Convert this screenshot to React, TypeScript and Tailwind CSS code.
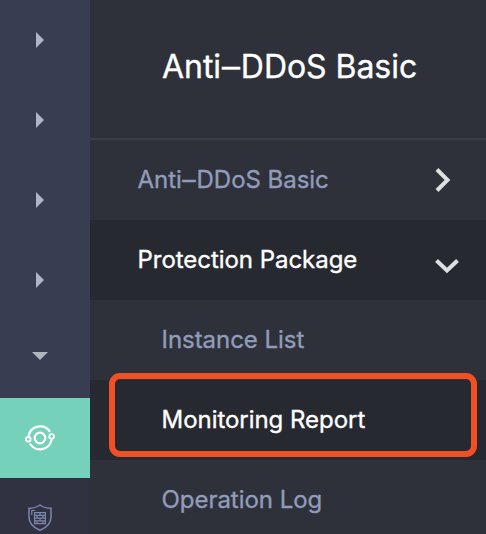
const RightArrow = () => (
  <div className="flex h-20 items-center justify-center">
    <svg width="8" height="16" viewBox="0 0 8 16" fill="#aeb4c4"><path d="M0 0 8 8 0 16Z" /></svg>
  </div>
);

const Dash = () => <span className="mx-[.06em] inline-block scale-x-[1.12]">–</span>;

export default function App() {
  return (
    <div className="flex h-[534px] w-[486px] overflow-hidden bg-[#2e3139] font-['Inter','Liberation_Sans',sans-serif] text-[24px] tracking-[-.04px] text-[#919cba] [-webkit-text-stroke:0.35px]">
      <aside className="flex w-[90px] shrink-0 flex-col bg-[#393d51] *:pr-[10px]">
        <RightArrow />
        <RightArrow />
        <RightArrow />
        <RightArrow />
        <div className="flex h-[78px] shrink-0 justify-center pt-8">
          <svg width="16" height="8" viewBox="0 0 16 8" fill="#b1b6c3"><path d="M0 0H16L8 8Z" /></svg>
        </div>
        <div className="flex h-20 shrink-0 items-center justify-center bg-[#76d1bb]">
          <svg width="32" height="32" viewBox="0 0 32 32" fill="none" stroke="white" strokeWidth="2.3">
            <circle cx="16" cy="16" r="5.3" />
            <path d="M4.6 13.8A11.8 11.8 0 0 1 26 9.8M5.8 21.5A11.8 11.8 0 0 0 27.6 17.6" />
            <circle cx="4.3" cy="17.3" r="2.3" strokeWidth="1.8" />
            <circle cx="27.6" cy="14.5" r="2.3" strokeWidth="1.8" />
          </svg>
        </div>
        <div className="flex h-14 justify-center bg-[#303241] pt-[26px]">
          <svg width="24" height="28" viewBox="0 0 24 28" fill="none" stroke="#7e86ae" strokeWidth="1.5">
            <path d="M12 1C8.5 3.4 5 4.3 1 4.3V13C1 19 5 23.5 12 26.2C19 23.5 23 19 23 13V4.3C19 4.3 15.5 3.4 12 1Z" />
            <path strokeWidth="1.2" d="M3.8 11V6.5H7.2" />
            <path strokeWidth="1.2" d="M6.6 8.6H17.4V19.6H6.6ZM6.6 11.4H17.4M6.6 14.1H17.4M6.6 16.9H17.4M12 8.6V11.4M9 11.4V14.1M15 11.4V14.1M12 14.1V16.9M9 16.9V19.6M15 16.9V19.6" />
          </svg>
        </div>
      </aside>
      <main className="flex-1">
        <h1 className="flex h-[140px] items-center border-b-2 border-[#3b3e47] pb-1 pl-[72px] text-[32px] whitespace-nowrap text-white">
          <span>Anti<Dash />DDoS Basic</span>
        </h1>
        <nav className="whitespace-nowrap">
          <div className="flex h-20 items-center justify-between pr-[35px] pl-[47.5px]">
            <span>Anti<Dash />DDoS Basic</span>
            <svg width="16" height="24" viewBox="0 0 16 24" fill="none" stroke="#dedfe0" strokeWidth="4"><path d="M2 1.5 12.5 12 2 22.5" /></svg>
          </div>
          <div className="flex h-20 items-center justify-between bg-[#272931] pr-[26px] pl-[47.5px] text-white">
            <span>Protection Package</span>
            <svg className="mt-3" width="26" height="16" viewBox="0 0 26 16" fill="none" stroke="#dedfe0" strokeWidth="4"><path d="M2.5 2.5 13 12.5 23.5 2.5" /></svg>
          </div>
          <div className="flex h-20 items-center pl-[71.5px]">Instance List</div>
          <div className="relative flex h-20 items-center bg-[#272931] pl-[71.5px] text-white">
            Monitoring Report
            <div className="absolute -top-[7px] left-[19px] h-[84px] w-[368px] rounded-[11px] border-6 border-[#f05023]" />
          </div>
          <div className="flex h-20 items-center pl-[71.5px]">Operation Log</div>
        </nav>
      </main>
    </div>
  );
}
